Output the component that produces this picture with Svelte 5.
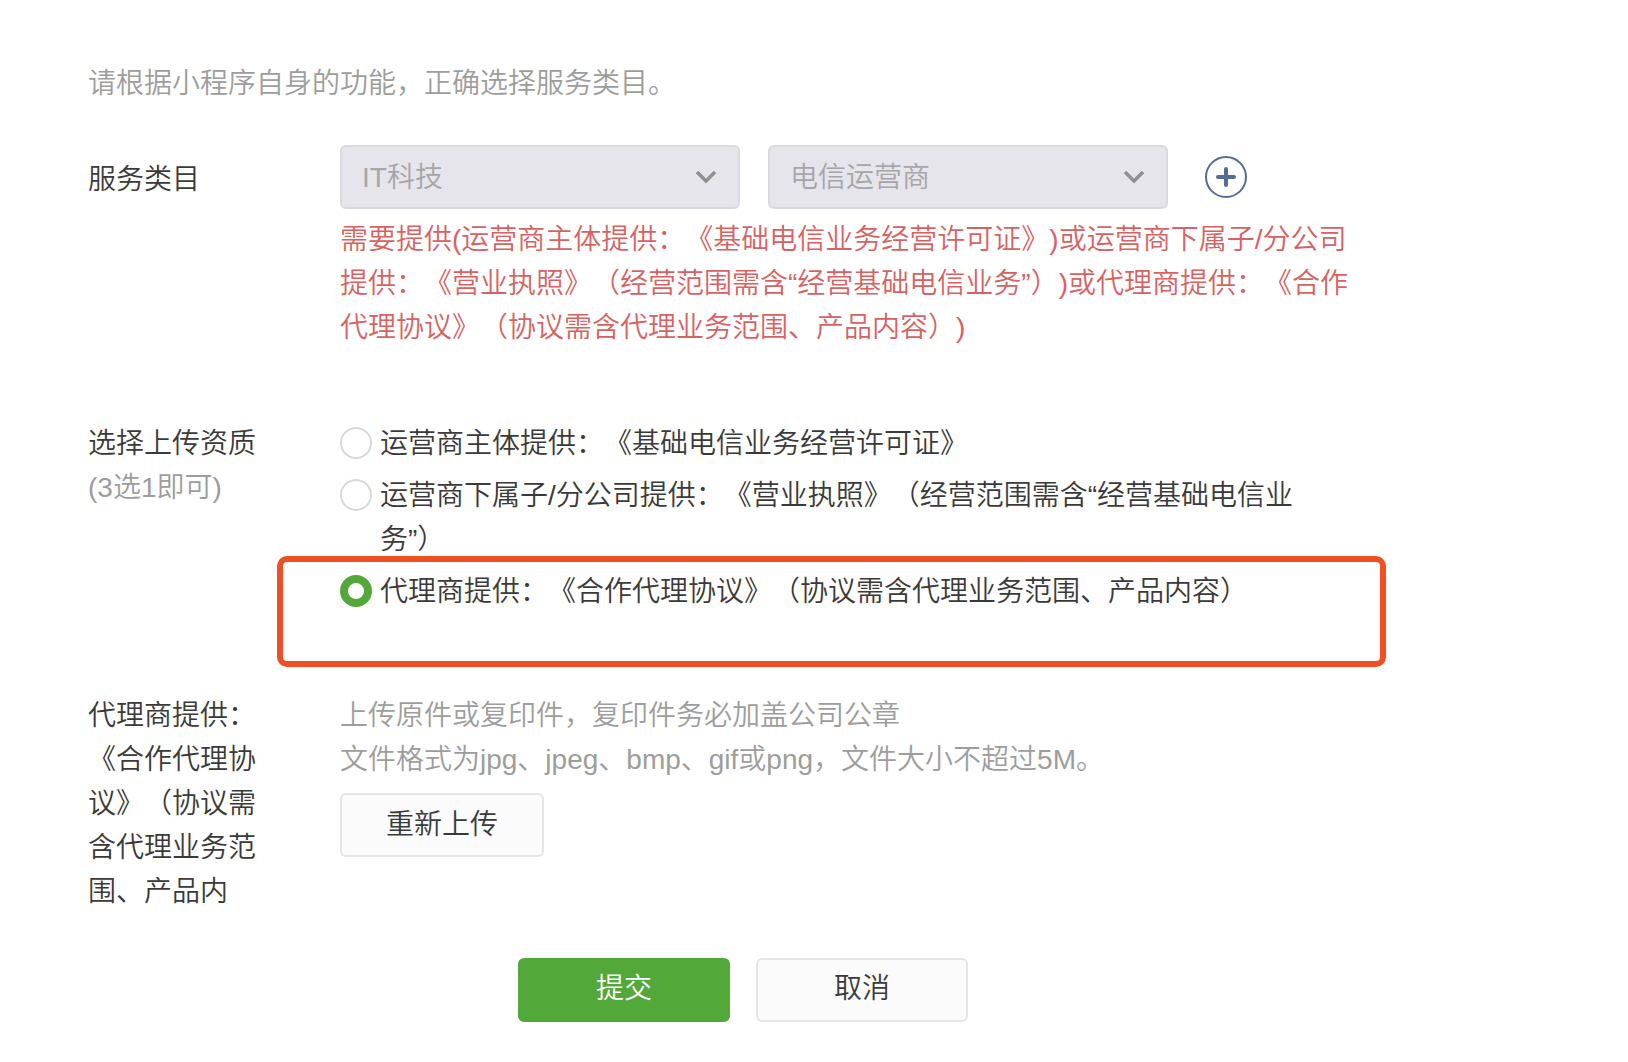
<script lang="ts">
  interface Qualification {
    id: string;
    text: string;
  }

  const qualifications: Qualification[] = [
    { id: 'operator', text: '运营商主体提供：《基础电信业务经营许可证》' },
    { id: 'branch', text: '运营商下属子/分公司提供：《营业执照》（经营范围需含“经营基础电信业务”）' },
    { id: 'agent', text: '代理商提供：《合作代理协议》（协议需含代理业务范围、产品内容）' }
  ];

  // The name column has room for five lines, so long names are shortened.
  const MAX_NAME = 29;

  let selected = $state('agent');

  let uploadLabel = $derived(
    (qualifications.find((q) => q.id === selected)?.text ?? '').slice(0, MAX_NAME)
  );
</script>

{#snippet chevron()}
  <svg class="chevron" width="22" height="14" viewBox="0 0 22 14" fill="none" aria-hidden="true">
    <path d="M2 2l9 9 9-9" stroke="currentColor" stroke-width="3.6" />
  </svg>
{/snippet}

<form class="panel" onsubmit={(e) => e.preventDefault()}>
  <div class="body">
    <p class="intro">请根据小程序自身的功能，正确选择服务类目。</p>

    <div class="row">
      <label class="name category-name" for="category">服务类目</label>
      <div class="field">
        <div class="selects">
          <div class="select">
            <select id="category" disabled>
              <option>IT科技</option>
            </select>
            {@render chevron()}
          </div>
          <div class="select">
            <select aria-label="二级类目" disabled>
              <option>电信运营商</option>
            </select>
            {@render chevron()}
          </div>
          <button class="add" type="button" aria-label="添加类目">
            <svg width="42" height="42" viewBox="0 0 42 42" fill="none" aria-hidden="true">
              <circle cx="21" cy="21" r="20" stroke="currentColor" stroke-width="2" />
              <path d="M21 13v16M13 21h16" stroke="currentColor" stroke-width="4" stroke-linecap="round" />
            </svg>
          </button>
        </div>
        <p class="warning">
          需要提供(运营商主体提供：《基础电信业务经营许可证》)或运营商下属子/分公司提供：《营业执照》（经营范围需含“经营基础电信业务”）)或代理商提供：《合作代理协议》（协议需含代理业务范围、产品内容）)
        </p>
      </div>
    </div>

    <div class="row" role="radiogroup" aria-labelledby="qualification-name">
      <div class="name" id="qualification-name">
        选择上传资质
        <div class="muted">(3选1即可)</div>
      </div>
      <div class="field options">
        {#each qualifications as q (q.id)}
          <label class="option" class:marked={q.id === 'agent'}>
            <input type="radio" name="qualification" value={q.id} bind:group={selected} />
            <span>{q.text}</span>
          </label>
        {/each}
      </div>
    </div>

    <div class="row upload">
      <label class="name" for="upload">{uploadLabel}</label>
      <div class="field">
        <p class="muted">上传原件或复印件，复印件务必加盖公司公章</p>
        <p class="muted">文件格式为jpg、jpeg、bmp、gif或png，文件大小不超过5M。</p>
        <button class="btn reupload" id="upload" type="button">重新上传</button>
      </div>
    </div>
  </div>

  <div class="footer">
    <button class="btn primary" type="submit">提交</button>
    <button class="btn" type="button">取消</button>
  </div>
</form>

<style>
  :global(body) {
    margin: 0;
    background: #ffffff;
  }

  .panel {
    box-sizing: border-box;
    margin-right: 142px;
    padding: 62px 0 40px;
    color: #3a3a3a;
    font-family: 'Liberation Sans', 'Noto Sans CJK SC', sans-serif;
    font-size: 28px;
    font-weight: 350;
    line-height: 44px;
    /* keep full-width punctuation at its full width */
    text-spacing-trim: space-all;
  }

  .body {
    padding: 0 126px 0 88px;
  }

  p {
    margin: 0;
  }

  .intro,
  .muted {
    color: #9d9d9d;
  }

  .intro {
    margin-bottom: 39px;
  }

  .row {
    display: flex;
    align-items: flex-start;
    gap: 84px;
    margin-bottom: 72px;
  }

  .name {
    flex: none;
    width: 168px;
  }

  .category-name {
    padding-top: 13px;
  }

  .field {
    flex: 1;
    min-width: 0;
  }

  .selects {
    display: flex;
    align-items: center;
    gap: 28px;
    margin-bottom: 9px;
  }

  .select {
    position: relative;
    flex: 0 1 400px;
  }

  select {
    appearance: none;
    display: block;
    box-sizing: border-box;
    width: 100%;
    height: 64px;
    margin: 0;
    padding: 2px 64px 0 20px;
    border: 2px solid #d9dae0;
    border-radius: 6px;
    background: #e6e5eb;
    color: #a6a6a8;
    font: inherit;
    opacity: 1;
  }

  .chevron {
    position: absolute;
    top: 25px;
    right: 23px;
    color: #919191;
    pointer-events: none;
  }

  .add {
    flex: none;
    display: flex;
    margin-left: 9px;
    padding: 0;
    border: none;
    background: none;
    color: #576b95;
    cursor: pointer;
  }

  .warning {
    color: #d86262;
  }

  .options {
    display: flex;
    flex-direction: column;
    gap: 8px;
    padding-bottom: 8px;
  }

  .option {
    position: relative;
    display: flex;
    align-items: flex-start;
    gap: 8px;
    padding-right: 40px;
    cursor: pointer;
  }

  .option input {
    appearance: none;
    flex: none;
    box-sizing: border-box;
    width: 32px;
    height: 32px;
    margin: 5px 0 7px;
    border: 2px solid #d9d9d9;
    border-radius: 50%;
    background: #ffffff;
  }

  .option input:checked {
    border: 8px solid #52a838;
  }

  .marked::after {
    content: '';
    position: absolute;
    top: -14px;
    right: -26px;
    bottom: -53px;
    left: -63px;
    border: 6px solid #f04f23;
    border-radius: 10px;
    pointer-events: none;
  }

  .upload {
    margin-bottom: 44px;
  }

  .btn {
    box-sizing: border-box;
    width: 212px;
    height: 64px;
    padding: 0 0 2px;
    border: 2px solid #e4e6e9;
    border-radius: 6px;
    background: #fbfbfb;
    color: inherit;
    font: inherit;
    cursor: pointer;
  }

  .reupload {
    width: 204px;
    margin-top: 11px;
    padding: 0;
  }

  .primary {
    border-color: #52a838;
    background: #52a838;
    color: #ffffff;
  }

  .footer {
    display: flex;
    justify-content: center;
    gap: 26px;
  }
</style>
